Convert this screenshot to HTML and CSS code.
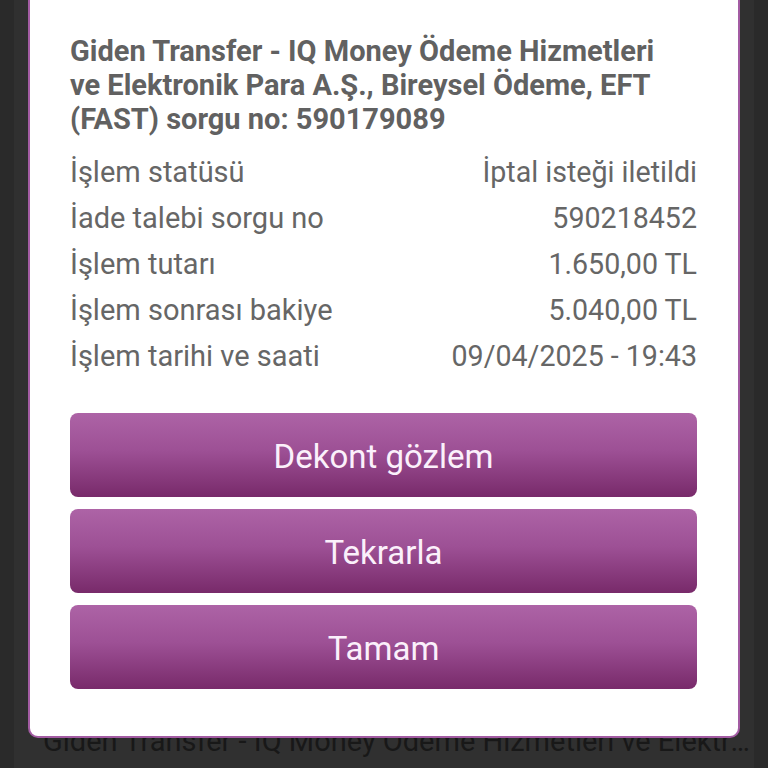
FILE: index.html
```html
<!DOCTYPE html>
<html lang="tr">
<head>
<meta charset="utf-8">
<link rel="stylesheet" href="styles.css">
</head>
<body>
<div class="screen">
  <div class="list">
    <div class="list-item">Giden Transfer - IQ Money Ödeme Hizmetleri ve Elektronik Para A.Ş.</div>
  </div>
  <div class="dialog">
    <h1 class="title">Giden Transfer - IQ Money Ödeme Hizmetleri ve Elektronik Para A.Ş., Bireysel Ödeme, EFT (FAST) sorgu no: 590179089</h1>
    <div class="rows">
      <div class="row"><span>İşlem statüsü</span><span>İptal isteği iletildi</span></div>
      <div class="row"><span>İade talebi sorgu no</span><span>590218452</span></div>
      <div class="row"><span>İşlem tutarı</span><span>1.650,00 TL</span></div>
      <div class="row"><span>İşlem sonrası bakiye</span><span>5.040,00 TL</span></div>
      <div class="row"><span>İşlem tarihi ve saati</span><span>09/04/2025 - 19:43</span></div>
    </div>
    <div class="buttons">
      <button class="btn">Dekont gözlem</button>
      <button class="btn">Tekrarla</button>
      <button class="btn">Tamam</button>
    </div>
  </div>
</div>
</body>
</html>
```
FILE: styles.css
```css
* { box-sizing: border-box; }
html, body {
  margin: 0;
  padding: 0;
  width: 768px;
  height: 768px;
  overflow: hidden;
  background: #2a2a2a;
  font-family: Roboto, "Noto Sans", sans-serif;
}
.screen {
  position: relative;
  width: 768px;
  height: 768px;
  padding: 0 14px;
}
.list {
  height: 768px;
  background: #303030;
  display: flex;
  flex-direction: column;
  justify-content: flex-end;
  padding-bottom: 10px;
}
.list-item {
  padding: 0 2px 0 29px;
  font-size: 29px;
  line-height: 34px;
  color: #181818;
  white-space: nowrap;
  overflow: hidden;
  text-overflow: ellipsis;
}
.dialog {
  position: absolute;
  left: 28px;
  top: -10px;
  width: 712px;
  background: #ffffff;
  border: 2px solid #a35ca3;
  border-top: none;
  border-radius: 0 0 10px 10px;
  padding: 44px 41px 47px 40px;
}
.title {
  margin: 0;
  padding-right: 20px;
  font-size: 29px;
  line-height: 34px;
  font-weight: 700;
  color: #616161;
}
.rows {
  margin-top: 13px;
  display: flex;
  flex-direction: column;
}
.row {
  display: flex;
  justify-content: space-between;
  height: 46px;
  align-items: center;
  font-size: 29px;
  color: #666666;
}
.row span:last-child {
  font-size: 28.6px;
}
.buttons {
  margin-top: 34px;
  display: flex;
  flex-direction: column;
  gap: 12px;
}
.btn {
  height: 84px;
  border: none;
  border-radius: 8px;
  background: linear-gradient(to bottom, #ad63a6 0%, #9d5095 45%, #782a6a 100%);
  color: #fbf0fb;
  font-family: Roboto, "Noto Sans", sans-serif;
  font-size: 33px;
  padding: 3px 0 0;
}
```
